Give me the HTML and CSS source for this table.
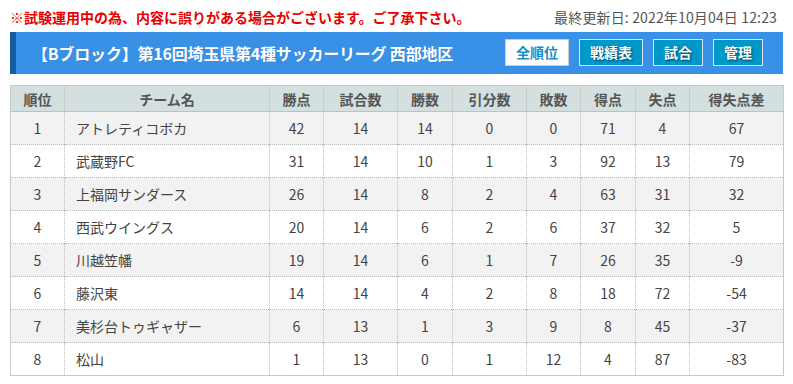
FILE: index.html
```html
<!DOCTYPE html>
<html lang="ja">
<head>
<meta charset="utf-8">
<title>順位表</title>
<link rel="stylesheet" href="styles.css">
</head>
<body>
<div class="page">
  <div class="topline">
    <span class="notice">※試験運用中の為、内容に誤りがある場合がございます。ご了承下さい。</span>
    <span class="updated">最終更新日: 2022年10月04日 12:23</span>
  </div>
  <div class="titlebar">
    <h1 class="title">【Bブロック】第16回埼玉県第4種サッカーリーグ 西部地区</h1>
    <nav class="tabs">
      <span class="tab tab-active">全順位</span>
      <span class="tab">戦績表</span>
      <span class="tab">試合</span>
      <span class="tab">管理</span>
    </nav>
  </div>
  <table class="standings">
    <colgroup>
      <col class="c54"><col class="c205"><col class="c54"><col class="c74"><col class="c55"><col class="c74"><col class="c54"><col class="c55"><col class="c54"><col class="c94">
    </colgroup>
    <thead>
      <tr><th>順位</th><th>チーム名</th><th>勝点</th><th>試合数</th><th>勝数</th><th>引分数</th><th>敗数</th><th>得点</th><th>失点</th><th>得失点差</th></tr>
    </thead>
    <tbody>
      <tr><td>1</td><td class="team">アトレティコボカ</td><td>42</td><td>14</td><td>14</td><td>0</td><td>0</td><td>71</td><td>4</td><td>67</td></tr>
      <tr><td>2</td><td class="team">武蔵野FC</td><td>31</td><td>14</td><td>10</td><td>1</td><td>3</td><td>92</td><td>13</td><td>79</td></tr>
      <tr><td>3</td><td class="team">上福岡サンダース</td><td>26</td><td>14</td><td>8</td><td>2</td><td>4</td><td>63</td><td>31</td><td>32</td></tr>
      <tr><td>4</td><td class="team">西武ウイングス</td><td>20</td><td>14</td><td>6</td><td>2</td><td>6</td><td>37</td><td>32</td><td>5</td></tr>
      <tr><td>5</td><td class="team">川越笠幡</td><td>19</td><td>14</td><td>6</td><td>1</td><td>7</td><td>26</td><td>35</td><td>-9</td></tr>
      <tr><td>6</td><td class="team">藤沢東</td><td>14</td><td>14</td><td>4</td><td>2</td><td>8</td><td>18</td><td>72</td><td>-54</td></tr>
      <tr><td>7</td><td class="team">美杉台トゥギャザー</td><td>6</td><td>13</td><td>1</td><td>3</td><td>9</td><td>8</td><td>45</td><td>-37</td></tr>
      <tr><td>8</td><td class="team">松山</td><td>1</td><td>13</td><td>0</td><td>1</td><td>12</td><td>4</td><td>87</td><td>-83</td></tr>
    </tbody>
  </table>
</div>
</body>
</html>
```
FILE: styles.css
```css
html, body {
  margin: 0;
  padding: 0;
  background: #fff;
}
body {
  font-family: "Noto Sans CJK JP", "Noto Sans", sans-serif;
  color: #444;
}
.page {
  padding: 0 10px;
}
.topline {
  display: flex;
  justify-content: space-between;
  align-items: center;
  height: 32px;
  padding-right: 6px;
}
.notice {
  color: #e60000;
  font-weight: bold;
  font-size: 14px;
  line-height: 18px;
  padding-top: 2px;
}
.updated {
  color: #555;
  font-size: 14px;
  line-height: 18px;
  padding-top: 2px;
  letter-spacing: 0.15px;
}
.titlebar {
  display: flex;
  align-items: center;
  justify-content: space-between;
  height: 42px;
  background: #3891e6;
  border-left: 6px solid #155da1;
  padding: 0 20px 0 16px;
}
.title {
  margin: 0;
  color: #fff;
  font-size: 16px;
  font-weight: bold;
  line-height: 20px;
  letter-spacing: -0.2px;
  text-shadow: 0 0 1px rgba(0,0,0,0.15);
}
.tabs {
  display: flex;
  gap: 10px;
  margin-top: -2px;
}
.tab {
  display: flex;
  align-items: center;
  justify-content: center;
  height: 25px;
  padding: 0 10px;
  background: #0097c9;
  border: 1px solid #d8e4ea;
  color: #fff;
  font-size: 14px;
  font-weight: bold;
  text-shadow: 1px 1px 2px rgba(0,0,0,0.6);
}
.tab-active {
  background: #fff;
  color: #1a8cc8;
  border-color: #cfcfcf;
  text-shadow: none;
}
.standings {
  margin-top: 11px;
  width: 773px;
  table-layout: fixed;
  border-collapse: collapse;
  border: 1px solid #c8c8c8;
  font-size: 14px;
}
.c54 { width: 54px; }
.c55 { width: 55px; }
.c74 { width: 74px; }
.c94 { width: 94px; }
.c205 { width: 205px; }
.standings th {
  background: #d4e0e0;
  color: #555;
  font-weight: bold;
  height: 25px;
  padding: 0;
  border-left: 1px dotted #bbb;
  border-bottom: 1px solid #c0c0c0;
  text-align: center;
  line-height: 18px;
}
.standings td {
  height: 32px;
  padding: 0;
  text-align: center;
  color: #444;
  border-left: 1px dotted #bbb;
  border-top: 1px dotted #bbb;
  line-height: 18px;
}
.standings th:first-child,
.standings td:first-child {
  border-left: none;
}
.standings td.team {
  text-align: left;
  padding-left: 11px;
}
.standings tbody tr:nth-child(odd) {
  background: #f2f2f2;
}
.standings tbody tr:nth-child(even) {
  background: #fff;
}
```
